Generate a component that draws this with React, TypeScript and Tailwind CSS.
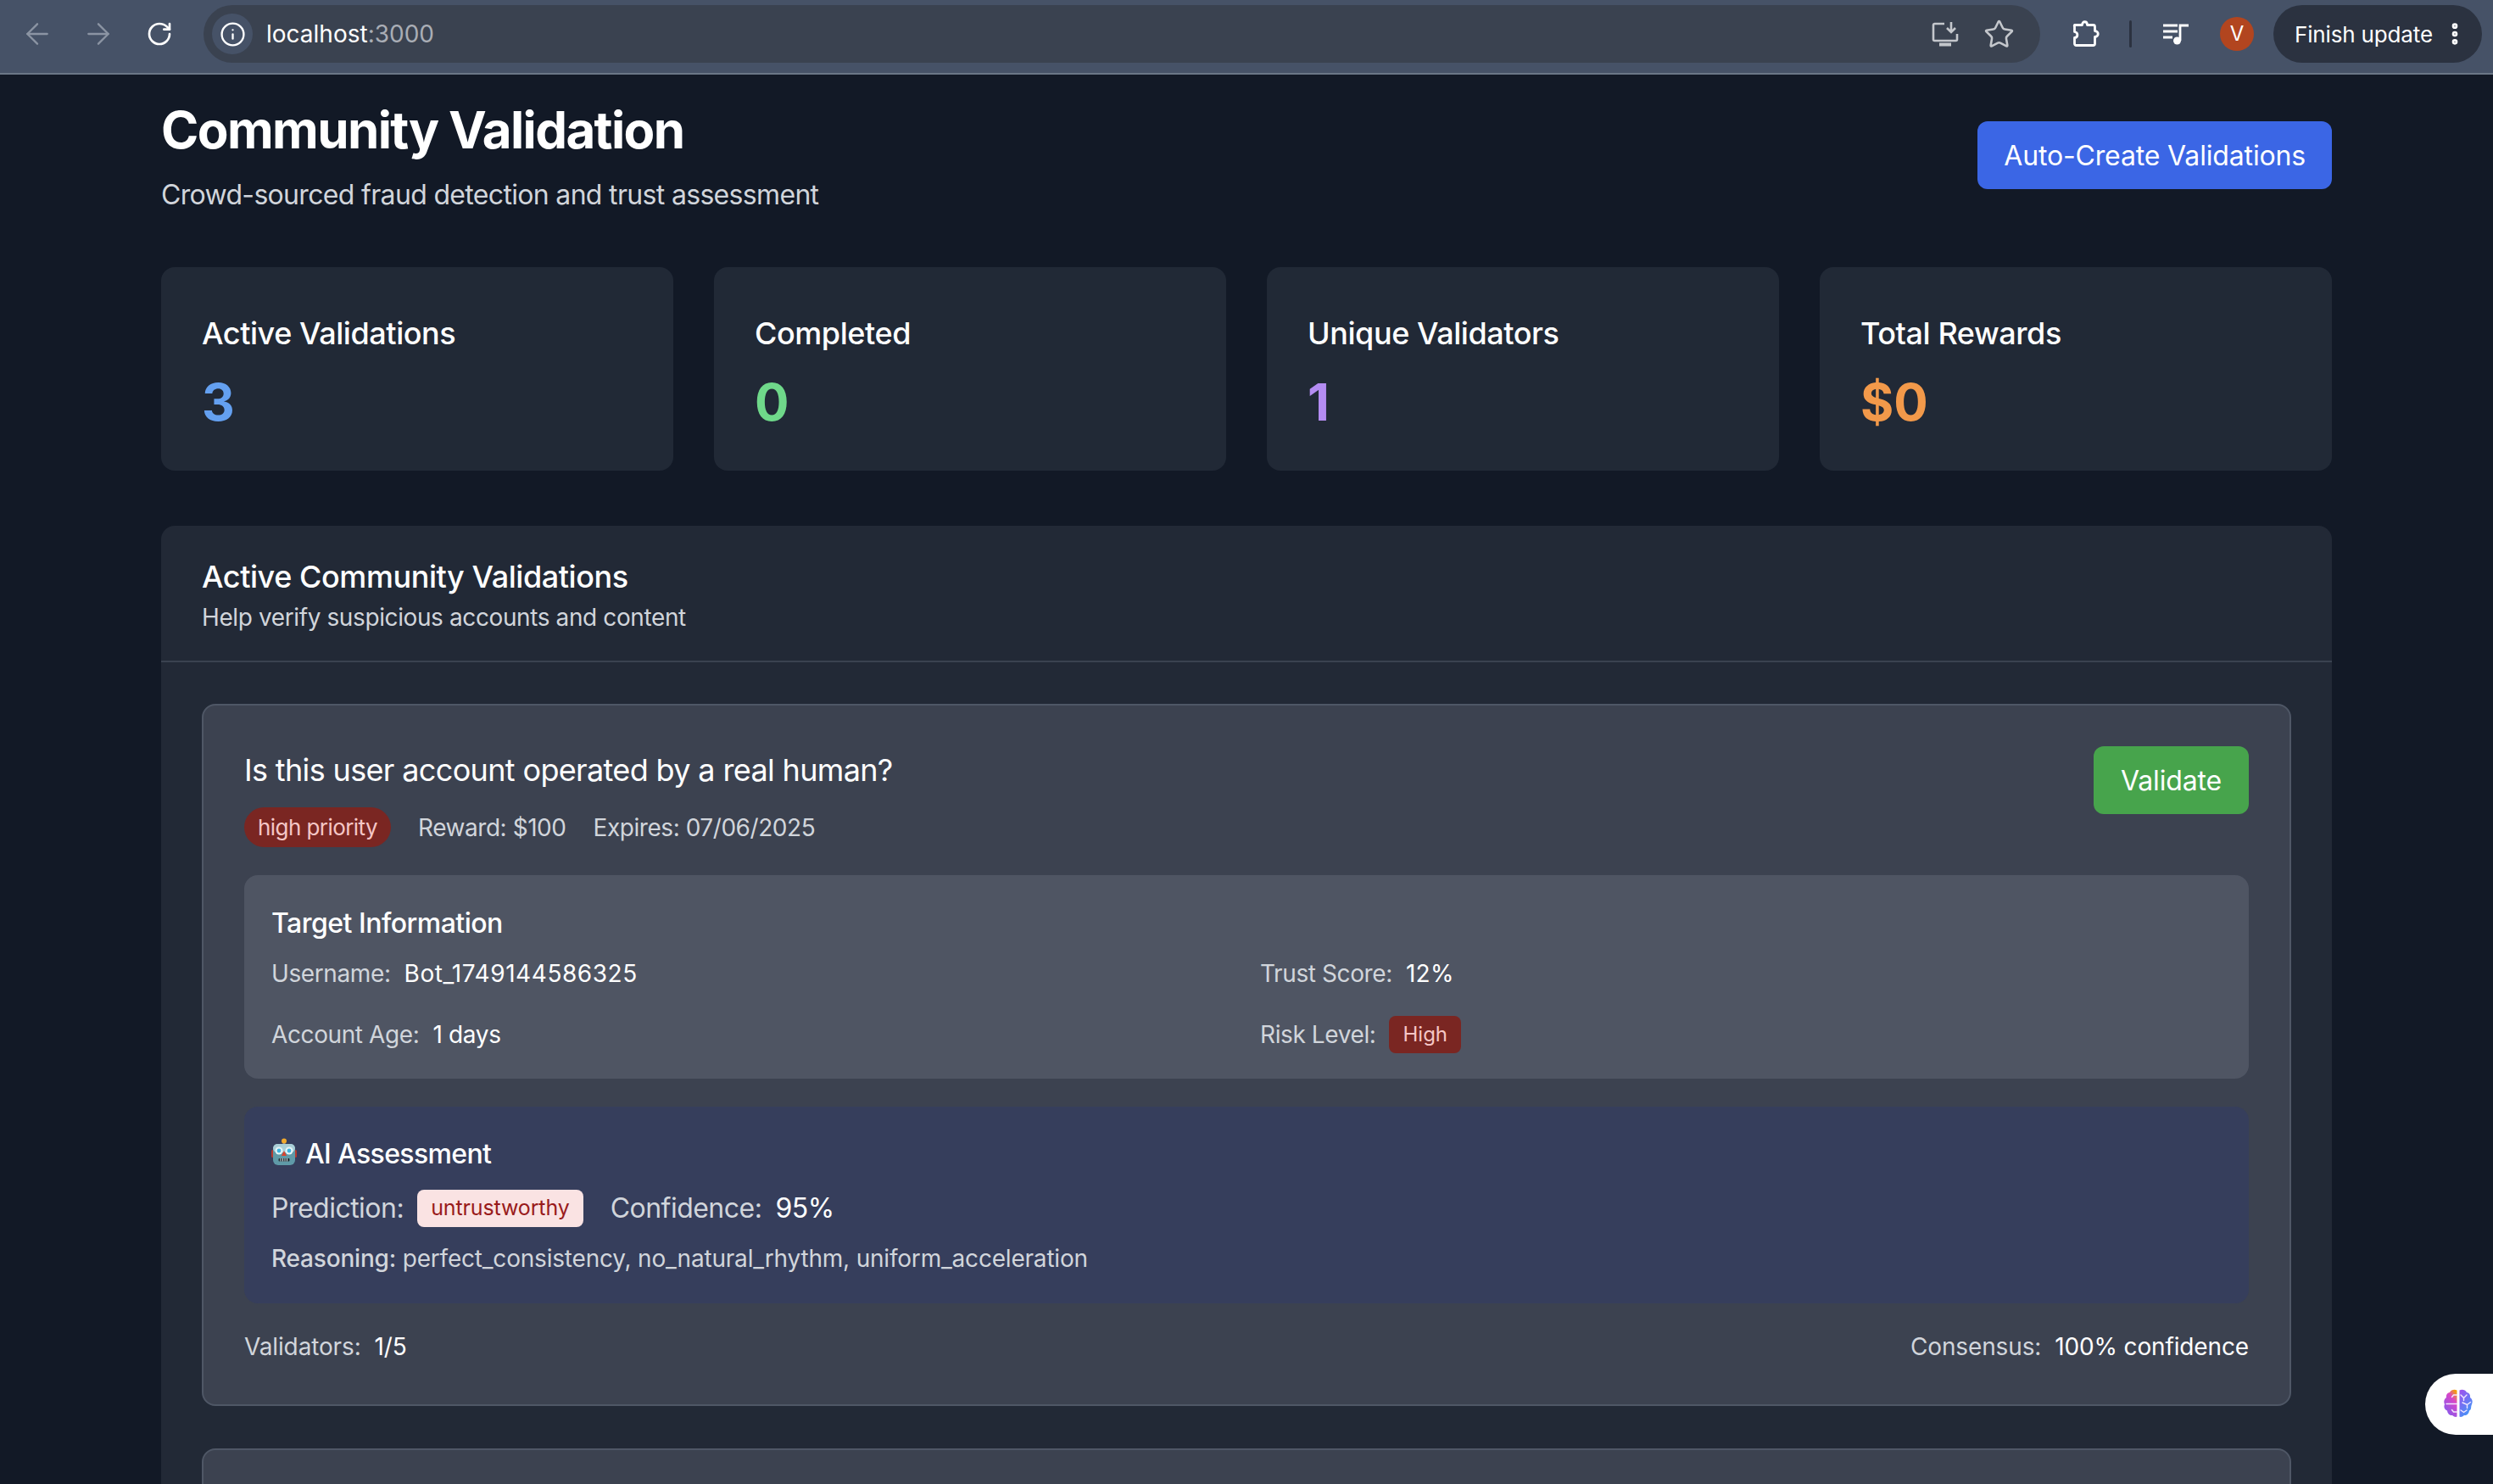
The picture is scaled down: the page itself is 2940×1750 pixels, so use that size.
import React from "react";
import { ArrowLeft, ArrowRight, RotateCw, Info, Star, EllipsisVertical } from "lucide-react";

const font = { fontFamily: "Inter, 'Noto Sans', sans-serif" };

function InstallIcon() {
  return (
    <svg width="32" height="30" viewBox="0 0 32 30" fill="none" stroke="#c4c7cc" strokeWidth="2.600">
      <path d="M15 3H3.500A1.500 1.500 0 0 0 2 4.500v17A1.500 1.500 0 0 0 3.500 23h25a1.500 1.500 0 0 0 1.500-1.500V15" />
      <path d="M9 27.500h14" strokeWidth="4" />
      <path d="M23 1v11M18 8l5 5 5-5" />
    </svg>
  );
}

function PuzzleIcon() {
  return (
    <svg width="32" height="32" viewBox="0 0 32 32" fill="none" stroke="#fff" strokeWidth="2.800" strokeLinejoin="round">
      <path d="M2.500 5.500h9c0-5 6-5 6 0h7a2 2 0 0 1 2 2v5c5 0 5 7 0 7v8a2 2 0 0 1-2 2h-20a2 2 0 0 1-2-2v-7c4 0 5-6 0-7v-6a2 2 0 0 1 0-2z" />
    </svg>
  );
}

function MediaIcon() {
  return (
    <svg width="30" height="26" viewBox="0 0 30 26" fill="none" stroke="#fff" strokeWidth="2.800">
      <path d="M0 3h17M0 10h17M0 17h11" />
      <path d="M20 21V3h10" />
      <circle cx="16.500" cy="21" r="4.500" fill="#fff" stroke="none" />
    </svg>
  );
}

function Robot() {
  return (
    <svg width="30" height="32" viewBox="0 0 30 32" className="mb-[6px] shrink-0">
      <rect x="0" y="14" width="4" height="9" rx="1.500" fill="#b5392f" />
      <rect x="26" y="14" width="4" height="9" rx="1.500" fill="#b5392f" />
      <rect x="13.500" y="4" width="3" height="6" fill="#8a8f96" />
      <circle cx="15" cy="3.500" r="3" fill="#f0a92c" />
      <rect x="2" y="7" width="26" height="25" rx="6" fill="#5f9aa8" />
      <rect x="2" y="7" width="26" height="10" rx="5" fill="#a9ced6" />
      <circle cx="9" cy="15" r="4.500" fill="#e6f4f7" />
      <circle cx="21" cy="15" r="4.500" fill="#e6f4f7" />
      <circle cx="9" cy="15" r="2.400" fill="#3fb4e0" />
      <circle cx="21" cy="15" r="2.400" fill="#3fb4e0" />
      <path d="M15 15l3 6h-6z" fill="#d9432f" />
      <rect x="8.500" y="24" width="13" height="3.500" rx="1" fill="#26333a" />
      <path d="M11 24v3.500M13.500 24v3.500M16 24v3.500M18.500 24v3.500" stroke="#c9d3d6" strokeWidth="1" />
    </svg>
  );
}

function Brain() {
  return (
    <svg width="38" height="38" viewBox="0 0 38 38" fill="none">
      <defs>
        <linearGradient id="bl" x1="0.800" y1="0" x2="0.200" y2="1">
          <stop offset="0" stopColor="#f59e0b" />
          <stop offset="0.300" stopColor="#d946c8" />
          <stop offset="1" stopColor="#7c5cf0" />
        </linearGradient>
        <linearGradient id="br" x1="0.200" y1="0" x2="0.800" y2="1">
          <stop offset="0" stopColor="#9a55ee" />
          <stop offset="1" stopColor="#3b9cf8" />
        </linearGradient>
      </defs>
      <path d="M17.500 2.500c-3-1.500-7-.5-8.500 2.500-3 .5-4.500 3-4 6-2.500 1.500-3.500 5-2 8-1.500 3 0 6.500 3 7.500.5 4 3.500 6 6 5.500 2 2 4.500 2.500 5.500 1.500z" fill="url(#bl)" />
      <path d="M20.500 2.500c3-1.500 7-.5 8.500 2.500 3 .5 4.500 3 4 6 2.500 1.500 3.500 5 2 8-1.500 3 0 6.500-3 7.500-.5 4-3.500 6-6 5.500-2 2-4.500 2.500-5.500 1.500z" fill="url(#br)" />
      <g stroke="#f3e8ff" strokeWidth="1.400" strokeLinecap="round">
        <path d="M5 18.500h12.500M17.500 8h-4l-2 2.500M17.500 28h-4l-2-2.500" />
        <path d="M22 8l3.500 3.500L29 8M25.500 11.500v3M24 17l5.500 2.500 4-3M29.500 19.500v4M22 26l3.500 2.500L29 26" />
      </g>
    </svg>
  );
}

function Stat({ label, value, color }: { label: string; value: string; color: string }) {
  return (
    <div className="h-[240px] rounded-[16px] bg-[#212936] px-[48px] pt-[50px]">
      <div className="text-[36px] leading-[56px] font-medium tracking-[-0.012em] text-white">{label}</div>
      <div className={`mt-[17px] text-[60px] leading-[72px] font-bold ${color}`}>{value}</div>
    </div>
  );
}

function Field({ label, children }: { label: string; children: React.ReactNode }) {
  return (
    <div className="flex h-[48px] items-center gap-[16px] text-[28px]">
      <span className="tracking-[-0.014em] text-[#d1d5db]">{label}</span>
      {children}
    </div>
  );
}

export default function App() {
  return (
    <div style={font} className="flex h-[1750px] flex-col overflow-hidden bg-[#121926] text-white">
      <header className="flex h-[88px] shrink-0 items-center border-b-[2px] border-[#6b7686] bg-[#465267] pr-[13px] pb-[6px] pl-[24px]">
        <ArrowLeft size={40} strokeWidth={1.400} className="text-[#8b94a3]" />
        <ArrowRight size={40} strokeWidth={1.400} className="ml-[32px] text-[#8b94a3]" />
        <RotateCw size={32} strokeWidth={2} className="ml-[36px] text-white" />
        <div className="ml-[36px] flex h-[68px] flex-1 items-center rounded-full bg-[#3a4250] pr-[30px] pl-[10px]">
          <div className="flex h-[48px] w-[48px] items-center justify-center rounded-full bg-[#465267]">
            <Info size={31} strokeWidth={1.800} />
          </div>
          <span className="ml-[16px] text-[28px]">
            localhost<span className="text-[#a9adb5]">:3000</span>
          </span>
          <div className="ml-auto flex items-center gap-[29px]">
            <InstallIcon />
            <Star size={37} strokeWidth={1.700} className="text-[#c4c7cc]" />
          </div>
        </div>
        <div className="ml-[38px]"><PuzzleIcon /></div>
        <div className="ml-[35px] h-[32px] w-[3px] rounded bg-[#2b3240]" />
        <div className="ml-[37px]"><MediaIcon /></div>
        <div className="ml-[37px] flex h-[40px] w-[40px] items-center justify-center rounded-full bg-[#b2451f] text-[24px]">V</div>
        <div className="ml-[23px] flex h-[68px] w-[246px] items-center rounded-full bg-[#2b3240] pl-[25px] text-[26px] tracking-[-0.006em]">
          Finish update
          <EllipsisVertical size={32} strokeWidth={3} className="ml-[10px]" />
        </div>
      </header>

      <main className="relative flex-1 px-[190px]">
        <section className="flex h-[227px] items-start justify-between pt-[29px]">
          <div>
            <h1 className="text-[60px] leading-[72px] font-bold tracking-[-0.027em]">Community Validation</h1>
            <p className="mt-[17px] text-[32px] leading-[48px] tracking-[-0.021em] text-[#d1d5db]">Crowd-sourced fraud detection and trust assessment</p>
          </div>
          <button className="mt-[26px] h-[80px] rounded-[12px] bg-[#3b66e5] px-[31px] pt-[2px] text-[32px] font-normal tracking-[-0.005em]">Auto-Create Validations</button>
        </section>

        <section className="grid grid-cols-4 gap-[48px]">
          <Stat label="Active Validations" value="3" color="text-[#64a0f0]" />
          <Stat label="Completed" value="0" color="text-[#6fd88a]" />
          <Stat label="Unique Validators" value="1" color="text-[#b48cf2]" />
          <Stat label="Total Rewards" value="$0" color="text-[#f2994a]" />
        </section>

        <section className="mt-[65px] rounded-t-[16px] bg-[#222936]">
          <div className="h-[161px] border-b-[2px] border-[#3a4250] px-[48px] pt-[36px]">
            <h2 className="text-[36px] leading-[48px] font-medium tracking-[-0.012em]">Active Community Validations</h2>
            <p className="mt-[2px] text-[28px] leading-[44px] tracking-[-0.014em] text-[#d1d5db]">Help verify suspicious accounts and content</p>
          </div>
          <div className="flex flex-col gap-[50px] px-[48px] pt-[49px]">
            <article className="h-[828px] rounded-[16px] border-[2px] border-[#4f5766] bg-[#3c4250] px-[48px] pt-[48px]">
              <div className="flex items-start justify-between">
                <div>
                  <h3 className="text-[36px] leading-[56px] font-normal tracking-[-0.018em]">Is this user account operated by a real human?</h3>
                  <div className="mt-[16px] flex h-[47px] items-center text-[28px] tracking-[-0.016em] text-[#d1d5db]">
                    <span className="flex h-[47px] items-center rounded-full bg-[#7a2622] px-[16px] text-[26px] tracking-[-0.022em] text-[#f5c6c6]">high priority</span>
                    <span className="ml-[32px]">Reward: $100</span>
                    <span className="ml-[32px]">Expires: 07/06/2025</span>
                  </div>
                </div>
                <button className="h-[80px] w-[183px] rounded-[12px] bg-[#47a44c] pt-[2px] text-[32px] font-normal tracking-[-0.005em]">Validate</button>
              </div>

              <div className="mt-[33px] h-[240px] rounded-[16px] bg-[#4f5563] px-[32px] pt-[33px]">
                <h4 className="text-[32px] leading-[48px] font-medium tracking-[-0.016em]">Target Information</h4>
                <div className="mt-[11px] grid grid-cols-2 gap-x-[32px] gap-y-[24px]">
                  <Field label="Username:"><span className="font-normal tracking-[0.02em]">Bot_1749144586325</span></Field>
                  <Field label="Trust Score:"><span className="font-normal tracking-[0.01em]">12%</span></Field>
                  <Field label="Account Age:"><span className="font-normal tracking-[-0.012em]">1 days</span></Field>
                  <Field label="Risk Level:">
                    <span className="flex h-[44px] items-center rounded-[8px] bg-[#7a2622] px-[16px] text-[24px] text-[#f5c6c6]">High</span>
                  </Field>
                </div>
              </div>

              <div className="mt-[33px] h-[232px] rounded-[16px] bg-[#363e5c] px-[32px] pt-[32px]">
                <h4 className="flex items-center gap-[10px] text-[32px] leading-[48px] font-medium tracking-[-0.02em]"><Robot />AI Assessment</h4>
                <div className="mt-[16px] flex h-[48px] items-center text-[32px] tracking-[-0.016em] text-[#d1d5db]">
                  <span>Prediction:</span>
                  <span className="ml-[16px] flex h-[44px] items-center rounded-[8px] bg-[#fae3e3] px-[16px] text-[25px] tracking-[-0.005em] text-[#991b1b]">untrustworthy</span>
                  <span className="ml-[32px]">Confidence:</span>
                  <span className="ml-[16px] font-normal text-white">95%</span>
                </div>
                <p className="mt-[13px] text-[28px] leading-[44px] tracking-[-0.007em] text-[#d1d5db]"><span className="font-medium">Reasoning:</span> perfect_consistency, no_natural_rhythm, uniform_acceleration</p>
              </div>

              <div className="mt-[29px] flex items-center justify-between text-[28px] leading-[44px] tracking-[-0.005em]">
                <div className="flex gap-[16px]"><span className="text-[#d1d5db]">Validators:</span><span className="font-normal">1/5</span></div>
                <div className="flex gap-[16px]"><span className="text-[#d1d5db]">Consensus:</span><span className="font-normal">100% confidence</span></div>
              </div>
            </article>
            <article className="h-[200px] rounded-[16px] border-[2px] border-[#4f5766] bg-[#3c4250]" />
          </div>
        </section>

        <div className="absolute top-[1532px] right-0 flex h-[72px] w-[80px] items-center rounded-l-full bg-white pl-[20px]">
          <Brain />
        </div>
      </main>
    </div>
  );
}
